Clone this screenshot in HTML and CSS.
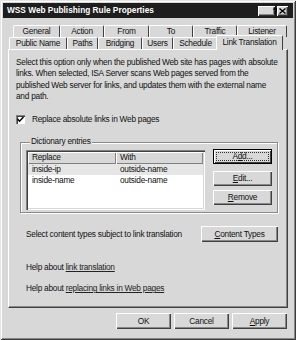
FILE: index.html
```html
<!DOCTYPE html>
<html>
<head>
<meta charset="utf-8">
<link rel="stylesheet" href="styles.css">
</head>
<body>
<div class="window">
  <div class="titlebar">
    <span class="title">WSS Web Publishing Rule Properties</span>
    <div class="tbtns">
      <span class="tbtn help">?</span>
      <span class="tbtn close"><svg width="7" height="6" viewBox="0 0 7 6"><path d="M0.5 0.5 L6.5 5.5 M6.5 0.5 L0.5 5.5" stroke="#000" stroke-width="1.4"/></svg></span>
    </div>
  </div>
  <div class="client">
    <div class="tabs">
      <div class="tabrow row1">
        <div class="tab">General</div>
        <div class="tab">Action</div>
        <div class="tab">From</div>
        <div class="tab">To</div>
        <div class="tab">Traffic</div>
        <div class="tab">Listener</div>
      </div>
      <div class="tabrow row2">
        <div class="tab">Public Name</div>
        <div class="tab">Paths</div>
        <div class="tab">Bridging</div>
        <div class="tab">Users</div>
        <div class="tab">Schedule</div>
        <div class="tab selected">Link Translation</div>
      </div>
    </div>
    <div class="panel">
      <p class="intro">Select this option only when the published Web site has pages with absolute<br>links. When selected, ISA Server scans Web pages served from the<br>published Web server for links, and updates them with the external name<br>and path.</p>
      <div class="check-row">
        <span class="checkbox"><svg width="7" height="7" viewBox="0 0 7 7"><path d="M0.5 3 L2.5 5.2 L6.5 1" fill="none" stroke="#000" stroke-width="1.5"/></svg></span>
        <span>Replace absolute links in Web pages</span>
      </div>
      <div class="group">
        <span class="group-label">Dictionary entries</span>
        <div class="group-body">
          <div class="listview">
            <div class="lv-header">
              <span class="lv-col c1">Replace</span>
              <span class="lv-col c2">With</span>
            </div>
            <div class="lv-row selected"><span class="c1">inside-ip</span><span class="c2">outside-name</span></div>
            <div class="lv-row"><span class="c1">inside-name</span><span class="c2">outside-name</span></div>
          </div>
          <div class="side-buttons">
            <button class="btn default add"><span class="focus">A<u>d</u>d...</span></button>
            <button class="btn edit"><u>E</u>dit...</button>
            <button class="btn remove"><u>R</u>emove</button>
          </div>
        </div>
      </div>
      <div class="types-row">
        <span>Select content types subject to link translation</span>
        <button class="btn types"><u>C</u>ontent Types</button>
      </div>
      <div class="help help1">Help about <a class="link">link translation</a></div>
      <div class="help help2">Help about <a class="link">replacing links in Web pages</a></div>
    </div>
    <div class="dialog-buttons">
      <button class="btn dlg">OK</button>
      <button class="btn dlg">Cancel</button>
      <button class="btn dlg"><u>A</u>pply</button>
    </div>
  </div>
</div>
</body>
</html>
```

FILE: styles.css
```css
* { box-sizing: border-box; }
html, body { margin: 0; padding: 0; }
body {
  width: 296px;
  height: 340px;
  overflow: hidden;
  background: #d8d8d8;
  font-family: "Liberation Sans", Arial, sans-serif;
  font-size: 8.3px;
  letter-spacing: -0.25px;
  line-height: 11px;
  color: #111;
}
.window {
  width: 296px;
  height: 340px;
  padding: 3px;
  background: #d8d8d8;
  box-shadow: inset 1px 1px #e4e4e4, inset -1px -1px #3a3a3a, inset 2px 2px #fff, inset -2px -2px #888;
}
.titlebar {
  height: 15px;
  background: #1e1e1e;
  display: flex;
  align-items: center;
  padding: 0 5px 0 4px;
  color: #fff;
}
.title {
  flex: 1;
  font-weight: bold;
  font-size: 8.3px;
  letter-spacing: 0;
  white-space: nowrap;
}
.tbtns { display: flex; gap: 2px; }
.tbtn {
  width: 11px;
  height: 10px;
  background: #d8d8d8;
  box-shadow: inset 1px 1px #fff, inset -1px -1px #303030, inset -2px -2px #888;
  display: flex;
  align-items: center;
  justify-content: center;
  color: #000;
  font-weight: bold;
  font-size: 9px;
  line-height: 10px;
}
.client { padding: 7px 5px 0 5px; }
.tabs { width: 280px; }
.tabrow { display: flex; align-items: flex-start; height: 12px; }
.row1 { padding-left: 5px; }
.row2 { padding-left: 1px; }
.tab {
  height: 12px;
  text-align: center;
  line-height: 11px;
  border-top: 1px solid #fff;
  border-left: 1px solid #fff;
  border-right: 1px solid #404040;
  border-radius: 2px 2px 0 0;
  background: #d8d8d8;
  white-space: nowrap;
}
.row1 .tab:nth-child(1) { width: 47px; }
.row1 .tab:nth-child(2) { width: 44px; }
.row1 .tab:nth-child(3) { width: 45px; }
.row1 .tab:nth-child(4) { width: 44px; }
.row1 .tab:nth-child(5) { width: 44px; }
.row1 .tab:nth-child(6) { width: 50px; }
.row2 .tab:nth-child(1) { width: 58px; }
.row2 .tab:nth-child(2) { width: 31px; }
.row2 .tab:nth-child(3) { width: 44px; }
.row2 .tab:nth-child(4) { width: 31px; }
.row2 .tab:nth-child(5) { width: 45px; }
.tab.selected {
  position: relative;
  z-index: 1;
  width: 67px;
  height: 15px;
  margin: -2px 0 -1px -2px;
  line-height: 12px;
}
.panel {
  width: 280px;
  height: 259px;
  border-top: 1px solid #fff;
  border-left: 1px solid #fff;
  border-right: 1px solid #404040;
  border-bottom: 1px solid #404040;
  box-shadow: inset -1px -1px #888;
  padding: 0;
}
.intro {
  margin: 0;
  padding: 7px 0 0 7px;
  width: 276px;
  height: 52.2px;
  line-height: 11.3px;
  white-space: nowrap;
}
.check-row {
  display: flex;
  align-items: center;
  margin-top: 12px;
  padding-left: 7px;
  height: 11px;
}
.checkbox {
  width: 9px;
  height: 9px;
  margin-right: 7px;
  background: #fff;
  box-shadow: inset 1px 1px #808080, inset 2px 2px #404040, inset -1px -1px #fff;
  display: flex;
  align-items: center;
  justify-content: center;
}
.group {
  margin: 17px 0 0 11px;
  width: 258px;
  height: 71px;
  border: 1px solid #8a8a8a;
  box-shadow: inset 1px 1px #fff, 1px 1px #fff;
  padding: 0 5px;
}
.group-label {
  display: block;
  width: max-content;
  height: 11px;
  margin: -7px 0 0 4px;
  padding: 0 1px;
  background: #d8d8d8;
}
.group-body {
  display: flex;
  align-items: flex-start;
  margin-top: 3px;
}
.listview {
  width: 179px;
  height: 60px;
  background: #fff;
  box-shadow: inset 1px 1px #808080, inset 2px 2px #404040, inset -1px -1px #fff, inset -2px -2px #d8d8d8;
  padding: 2px;
}
.lv-header { display: flex; height: 12px; }
.lv-col {
  height: 12px;
  background: #d8d8d8;
  padding-left: 4px;
  line-height: 11px;
  box-shadow: inset 1px 1px #fff, inset -1px -1px #808080;
}
.lv-col.c1 { width: 88px; }
.lv-col.c2 { flex: 1; }
.lv-row { display: flex; height: 11px; line-height: 11px; }
.lv-row.selected { background: #e6e6e6; }
.lv-row .c1 { width: 88px; padding-left: 4px; }
.lv-row .c2 { padding-left: 4px; }
.side-buttons {
  display: flex;
  flex-direction: column;
  margin-left: 8px;
  margin-top: -1px;
}
.btn {
  font: inherit;
  letter-spacing: inherit;
  color: #111;
  background: #d8d8d8;
  border: none;
  padding: 0;
  margin: 0;
  box-shadow: inset 1px 1px #fff, inset -1px -1px #404040, inset -2px -2px #888;
  display: flex;
  align-items: center;
  justify-content: center;
}
.side-buttons .btn { width: 59px; height: 15px; }
.btn.edit { margin-top: 7px; }
.btn.remove { margin-top: 4px; }
.btn.default {
  box-shadow: inset 0 0 0 1px #000, inset 2px 2px #fff, inset -2px -2px #404040;
}
.focus {
  display: flex;
  align-items: center;
  justify-content: center;
  width: 53px;
  height: 9px;
  border: 1px dotted #333;
}
.types-row {
  display: flex;
  align-items: center;
  justify-content: space-between;
  width: 269px;
  margin-top: 13px;
  padding-left: 17px;
}
.btn.types { width: 77px; height: 16px; }
.help { padding-left: 17px; }
.help1 { margin-top: 20px; }
.help2 { margin-top: 10px; }
.link { color: #222; text-decoration: underline; }
.dialog-buttons {
  display: flex;
  justify-content: flex-end;
  gap: 3px;
  margin-top: 5px;
  padding-right: 1px;
}
.btn.dlg { width: 55px; height: 16px; }
```
